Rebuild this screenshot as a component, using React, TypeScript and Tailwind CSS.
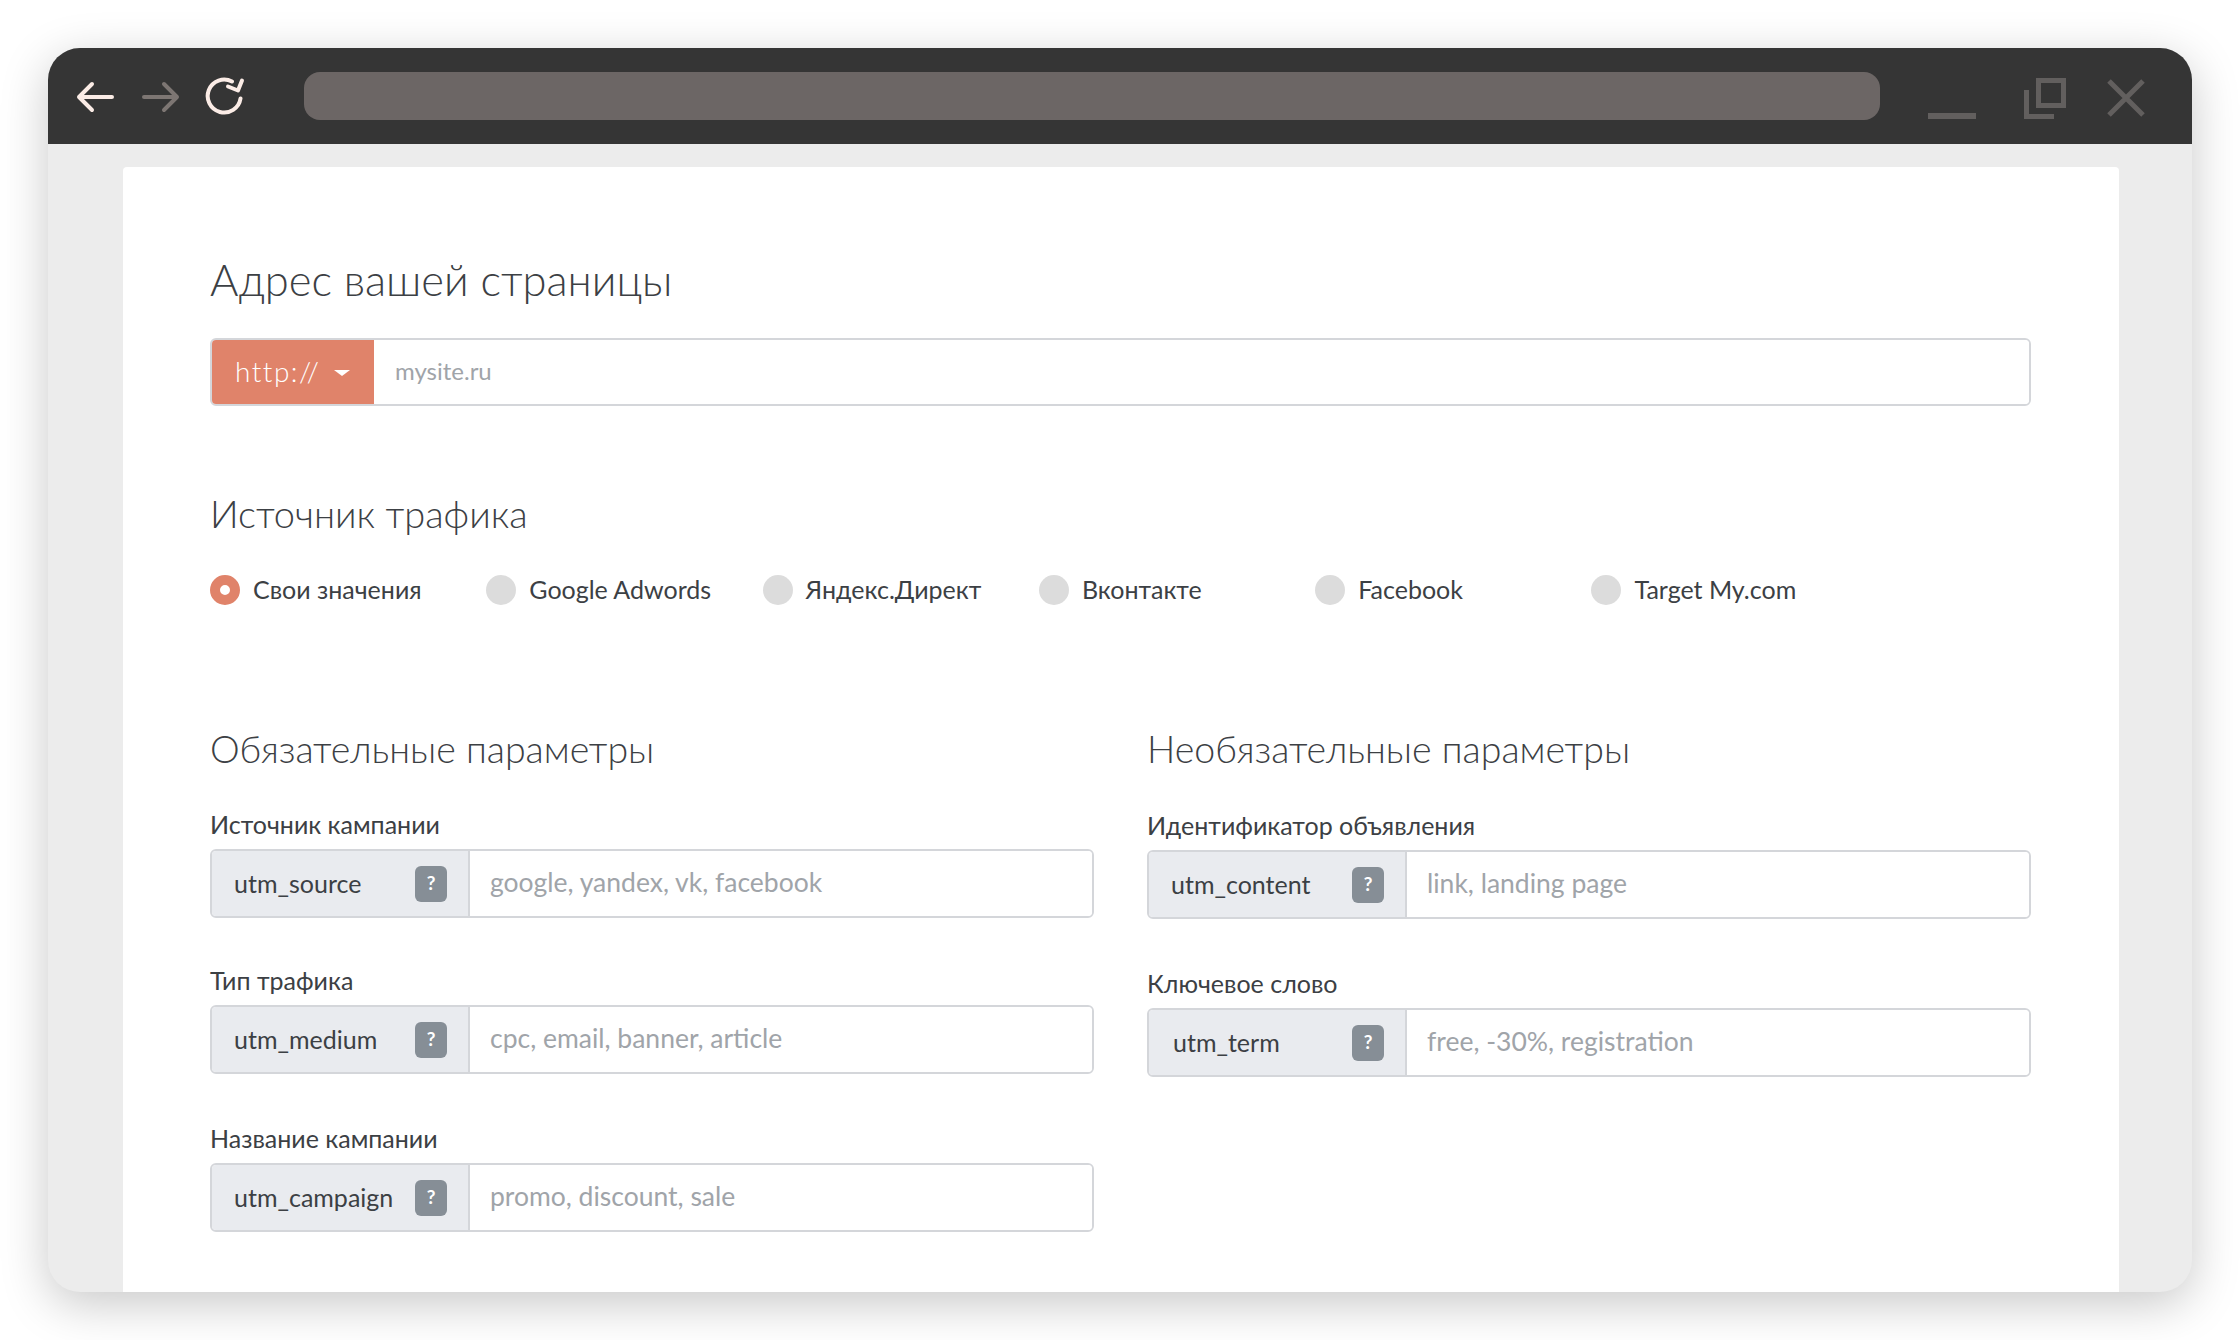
const fontStack = "font-['Lato','Open_Sans','Noto_Sans',sans-serif]";

const sources = ["Свои значения", "Google Adwords", "Яндекс.Директ", "Вконтакте", "Facebook", "Target My.com"];

function BrowserBar() {
  return (
    <div className="flex h-[96px] shrink-0 items-center bg-[#353535]">
      <div className="ml-[28px] mt-[2px] flex w-[228px] items-center">
        <svg width="40" height="32" viewBox="0 0 40 32" fill="none" stroke="#fbece6" strokeWidth="4" strokeLinecap="round" strokeLinejoin="round">
          <path d="M36 16H3M16 3L3 16l13 13" />
        </svg>
        <svg className="ml-[24px]" width="40" height="32" viewBox="0 0 40 32" fill="none" stroke="#7d7673" strokeWidth="4" strokeLinecap="round" strokeLinejoin="round">
          <path d="M4 16h33M24 3l13 13-13 13" />
        </svg>
        <svg className="ml-[24px]" width="44" height="44" viewBox="0 0 44 44" fill="none" stroke="#fbece6" strokeWidth="4" strokeLinecap="round" strokeLinejoin="round">
          <path d="M36.5 23.5A16.5 16.5 0 1 1 28 6.5" />
          <path d="M38 5.5l-4 10-10-4" />
        </svg>
      </div>
      <div className="h-[48px] w-[1576px] rounded-[16px] bg-[#6c6665]" />
      <div className="ml-[48px] flex h-[48px] items-start">
        <div className="mt-[41px] h-[6px] w-[48px] bg-[#625f5e]" />
        <svg className="ml-[48px] mt-[6px]" width="42" height="41" viewBox="0 0 42 41" fill="none" stroke="#625f5e" strokeWidth="5">
          <path d="M14.5 2.5h25v25h-25z" />
          <path d="M30 38.5H2.5V12" />
        </svg>
        <svg className="ml-[41px] mt-[7px]" width="38" height="38" viewBox="0 0 38 38" fill="none" stroke="#625f5e" strokeWidth="5">
          <path d="M2 2l34 34M36 2L2 36" />
        </svg>
      </div>
    </div>
  );
}

function Radio({ label, checked }: { label: string; checked?: boolean }) {
  return (
    <label className="flex items-center gap-[13px]">
      {checked ? (
        <span className="h-[30px] w-[30px] rounded-full border-[10px] border-[#e0836a] bg-white" />
      ) : (
        <span className="h-[30px] w-[30px] rounded-full bg-[#dcdcdc]" />
      )}
      <span className="whitespace-nowrap text-[25px] text-[#3c4044]">{label}</span>
    </label>
  );
}

function Field({ label, name, placeholder, nudge }: { label: string; name: string; placeholder: string; nudge?: boolean }) {
  return (
    <div>
      <div className="mb-[7px] h-[34px] text-[25px] leading-[33px] text-[#3c4044]">{label}</div>
      <div className="flex h-[69px] overflow-hidden rounded-[6px] border-2 border-[#d4d6da]">
        <div className={`flex w-[258px] shrink-0 items-center border-r-2 border-[#d4d6da] bg-[#e9ebef] pr-[21px] ${nudge ? "pl-[24px]" : "pl-[22px]"}`}>
          <span className="flex-1 text-[25px] text-[#3c4044]">{name}</span>
          <span className="flex h-[36px] w-[32px] items-center justify-center rounded-[6px] bg-[#868e96] text-[19px] font-bold text-white">?</span>
        </div>
        <input className="min-w-0 flex-1 bg-white pb-[1px] pl-[20px] text-[26.5px] outline-none placeholder:text-[#a0a4a9]" placeholder={placeholder} />
      </div>
    </div>
  );
}

export default function App() {
  return (
    <div className={`h-[1340px] w-[2240px] bg-white pl-[48px] pt-[48px] ${fontStack}`}>
      <div className="flex h-[1244px] w-[2144px] flex-col overflow-hidden rounded-[32px] bg-[#ececec] shadow-[0_12px_48px_rgba(0,0,0,0.22)]">
        <BrowserBar />
        <div className="ml-[75px] mr-[73px] mt-[23px] flex-1 overflow-hidden rounded-t-[4px] bg-white pl-[87px] pr-[88px] pt-[85px]">
          <h1 className="h-[56px] text-[43.5px] font-light leading-[54px] text-[#3c4044]">Адрес вашей страницы</h1>

          <div className="mt-[30px] flex h-[68px] overflow-hidden rounded-[6px] border-2 border-[#d4d6da]">
            <button className="-m-[2px] flex w-[166px] shrink-0 items-center bg-[#e0836a] pb-[3px] pl-[25px] text-[28px] font-light tracking-[1.5px] text-white">
              http://
              <span className="ml-[14px] mt-[4px] h-0 w-0 border-x-[8px] border-t-[6px] border-x-transparent border-t-white" />
            </button>
            <input className="min-w-0 flex-1 bg-white pb-[3px] pl-[21px] text-[24px] outline-none placeholder:text-[#a0a4a9]" placeholder="mysite.ru" />
          </div>

          <h2 className="mt-[80px] h-[56px] text-[38px] font-light leading-[54px] text-[#3c4044]">Источник трафика</h2>

          <div className="mt-[28px] grid h-[40px] grid-cols-[repeat(6,276.3px)] items-center">
            {sources.map((s, i) => (
              <Radio key={s} label={s} checked={i === 0} />
            ))}
          </div>

          <div className="mt-[112px] grid grid-cols-2 gap-x-[53px]">
            <div>
              <h2 className="h-[56px] text-[37.5px] font-light leading-[54px] text-[#3c4044]">Обязательные параметры</h2>
              <div className="mt-[30px] flex flex-col gap-[46px]">
                <Field label="Источник кампании" name="utm_source" placeholder="google, yandex, vk, facebook" />
                <Field label="Тип трафика" name="utm_medium" placeholder="cpc, email, banner, article" />
                <div className="mt-[2px]">
                  <Field label="Название кампании" name="utm_campaign" placeholder="promo, discount, sale" />
                </div>
              </div>
            </div>
            <div>
              <h2 className="h-[56px] text-[37.5px] font-light leading-[54px] text-[#3c4044]">Необязательные параметры</h2>
              <div className="mt-[31px] flex flex-col gap-[48px]">
                <Field label="Идентификатор объявления" name="utm_content" placeholder="link, landing page" />
                <Field label="Ключевое слово" name="utm_term" placeholder="free, -30%, registration" nudge />
              </div>
            </div>
          </div>
        </div>
      </div>
    </div>
  );
}
